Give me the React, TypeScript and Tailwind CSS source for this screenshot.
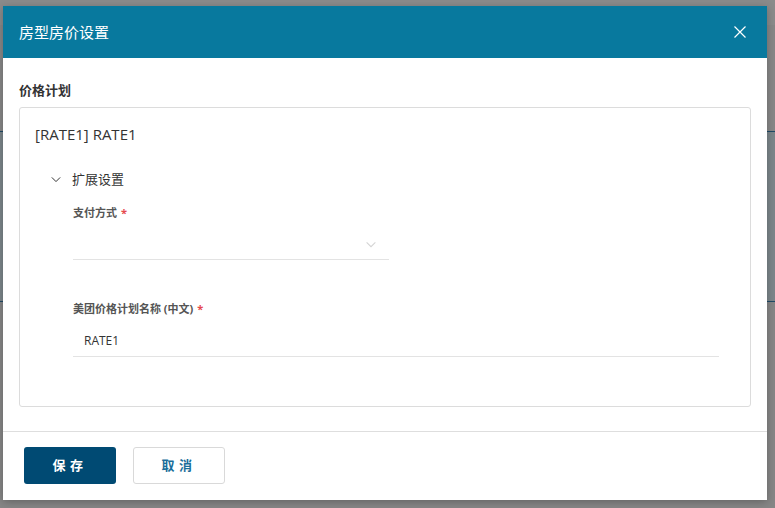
import React from "react";

const font = { fontFamily: '"Open Sans", "Noto Sans CJK SC", sans-serif' };

const ChevronDown: React.FC<{ className?: string; stroke?: string }> = ({ className, stroke = "#333" }) => (
  <svg className={className} viewBox="0 0 12 8" fill="none">
    <path d="M1 1.5L6 6.5L11 1.5" stroke={stroke} strokeWidth="1.2" />
  </svg>
);

const Required = () => <span className="ml-1 text-[#e5484d]">*</span>;

export default function App() {
  return (
    <div className="relative h-[508px] w-[775px] overflow-hidden bg-[#888888]" style={font}>
      {/* dimmed page behind the dialog */}
      <div className="flex h-full flex-col">
        <div className="h-[25px] bg-[#8b8b8b]" />
        <div className="h-[106px] bg-[#878787]" />
        <div className="h-px bg-[#1f4a66]" />
        <div className="h-[169px] bg-[#7c868a]" />
        <div className="h-px bg-[#1f4a66]" />
        <div className="flex-1 bg-[#868686]" />
      </div>

      {/* dialog */}
      <div className="absolute left-[3px] top-[6px] flex h-[494px] w-[764px] flex-col bg-white shadow-[0_2px_8px_rgba(0,0,0,0.25)]">
        <div className="flex h-[52px] shrink-0 items-center justify-between bg-[#08799e] pl-[16px] pr-[21px]">
          <span className="text-[15px] text-white">房型房价设置</span>
          <svg className="h-[12px] w-[12px]" viewBox="0 0 12 12" fill="none">
            <path d="M0.5 0.5L11.5 11.5M11.5 0.5L0.5 11.5" stroke="#fff" strokeWidth="1.2" />
          </svg>
        </div>

        <div className="px-[16px] pb-[24px] pt-[23px]">
          <div className="mb-[8px] text-[13px] font-semibold leading-[18px] text-[#333]">价格计划</div>
          <div className="h-[300px] rounded-[3px] border border-[#dcdcdc] pl-[15px] pr-[31px] pt-[16px]">
            <div className="text-[15px] leading-[20px] text-[#333]">[RATE1] RATE1</div>

            <div className="mt-[26px] flex items-center">
              <ChevronDown className="ml-[16px] h-[7px] w-[10px]" />
              <span className="ml-[11px] text-[13px] leading-[18px] text-[#333]">扩展设置</span>
            </div>

            <div className="pl-[38px]">
              <div className="mt-[17px] text-[11px] font-bold leading-[16px] text-[#555]">
                支付方式
                <Required />
              </div>
              <div className="mt-[9px] flex h-[30px] w-[316px] items-center justify-end border-b border-[#e3e3e3] pr-[12px]">
                <ChevronDown className="h-[7px] w-[12px]" stroke="#d4d4d4" />
              </div>

              <div className="mt-[41px] text-[11px] font-bold leading-[16px] text-[#555]">
                美团价格计划名称 (中文)
                <Required />
              </div>
              <div className="mt-[9px] flex h-[31px] w-full items-center border-b border-[#e3e3e3] pl-[11px] text-[12px] text-[#333]">
                RATE1
              </div>
            </div>
          </div>
        </div>

        <div className="flex gap-[17px] border-t border-[#dedede] pl-[21px] pt-[15px]">
          <button className="h-[37px] w-[92px] rounded-[3px] bg-[#004a73] text-[13px] font-bold tracking-[0.35em] text-white">
            保存
          </button>
          <button className="h-[37px] w-[92px] rounded-[3px] border border-[#d9d9d9] bg-white text-[13px] font-bold tracking-[0.35em] text-[#1b6e9a]">
            取消
          </button>
        </div>
      </div>
    </div>
  );
}
